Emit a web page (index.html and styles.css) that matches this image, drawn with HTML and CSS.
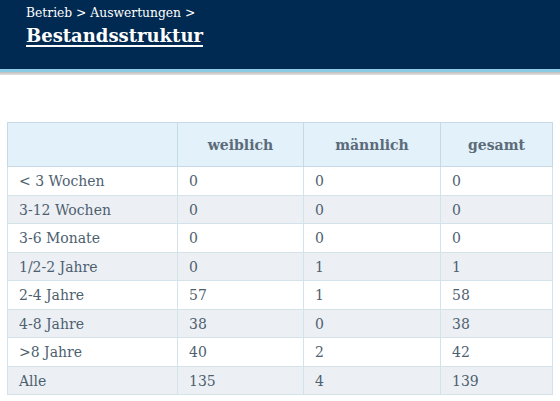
FILE: index.html
```html
<!DOCTYPE html>
<html lang="de">
<head>
<meta charset="utf-8">
<title>Bestandsstruktur</title>
<link rel="stylesheet" href="styles.css">
</head>
<body>
<header class="top">
  <div class="crumbs">Betrieb &gt; Auswertungen &gt;</div>
  <h1 class="title">Bestandsstruktur</h1>
</header>
<div class="stripe-blue"></div>
<div class="stripe-gray"></div>
<main class="content">
  <table class="stats">
    <colgroup>
      <col class="c1"><col class="c2"><col class="c3"><col class="c4">
    </colgroup>
    <thead>
      <tr><th></th><th>weiblich</th><th>männlich</th><th>gesamt</th></tr>
    </thead>
    <tbody>
      <tr><td>&lt; 3 Wochen</td><td>0</td><td>0</td><td>0</td></tr>
      <tr><td>3-12 Wochen</td><td>0</td><td>0</td><td>0</td></tr>
      <tr><td>3-6 Monate</td><td>0</td><td>0</td><td>0</td></tr>
      <tr><td>1/2-2 Jahre</td><td>0</td><td>1</td><td>1</td></tr>
      <tr><td>2-4 Jahre</td><td>57</td><td>1</td><td>58</td></tr>
      <tr><td>4-8 Jahre</td><td>38</td><td>0</td><td>38</td></tr>
      <tr><td>&gt;8 Jahre</td><td>40</td><td>2</td><td>42</td></tr>
      <tr><td>Alle</td><td>135</td><td>4</td><td>139</td></tr>
    </tbody>
  </table>
</main>
</body>
</html>
```
FILE: styles.css
```css
html, body {
  margin: 0;
  padding: 0;
  background: #ffffff;
  font-family: "DejaVu Serif", "Liberation Serif", serif;
}
.top {
  background: #012a52;
  height: 69px;
  box-sizing: border-box;
  padding: 5px 0 0 26px;
  color: #ffffff;
}
.crumbs {
  font-size: 12.3px;
  line-height: 16px;
}
.title {
  margin: 3px 0 0 0;
  font-size: 18px;
  line-height: 23px;
  font-weight: bold;
  text-decoration: underline;
  text-decoration-thickness: 2px;
  text-underline-offset: 3px;
}
.stripe-blue {
  height: 3px;
  background: #8ccbe6;
}
.stripe-gray {
  height: 3px;
  background: linear-gradient(#bdbdbd, #e2e2e2);
}
.content {
  padding: 47px 8px 0 7px;
}
.stats {
  width: 545px;
  table-layout: fixed;
  border-collapse: collapse;
  border: 1px solid #c5dae4;
  font-size: 14px;
  color: #4e5f70;
}
.c1 { width: 170px; }
.c2 { width: 126px; }
.c3 { width: 137px; }
.c4 { width: 112px; }
.stats th {
  background: #e2f1fa;
  color: #5b6b79;
  font-weight: bold;
  text-align: center;
  height: 42px;
  padding: 1px 0 0 0;
  border: 1px solid #c5dae4;
}
.stats td {
  border: 1px solid #d4e2ea;
  padding: 5px 11px 3px 11px;
  line-height: 19.5px;
  text-align: left;
}
.stats tbody tr:nth-child(even) td {
  background: #ecf0f4;
}
```
